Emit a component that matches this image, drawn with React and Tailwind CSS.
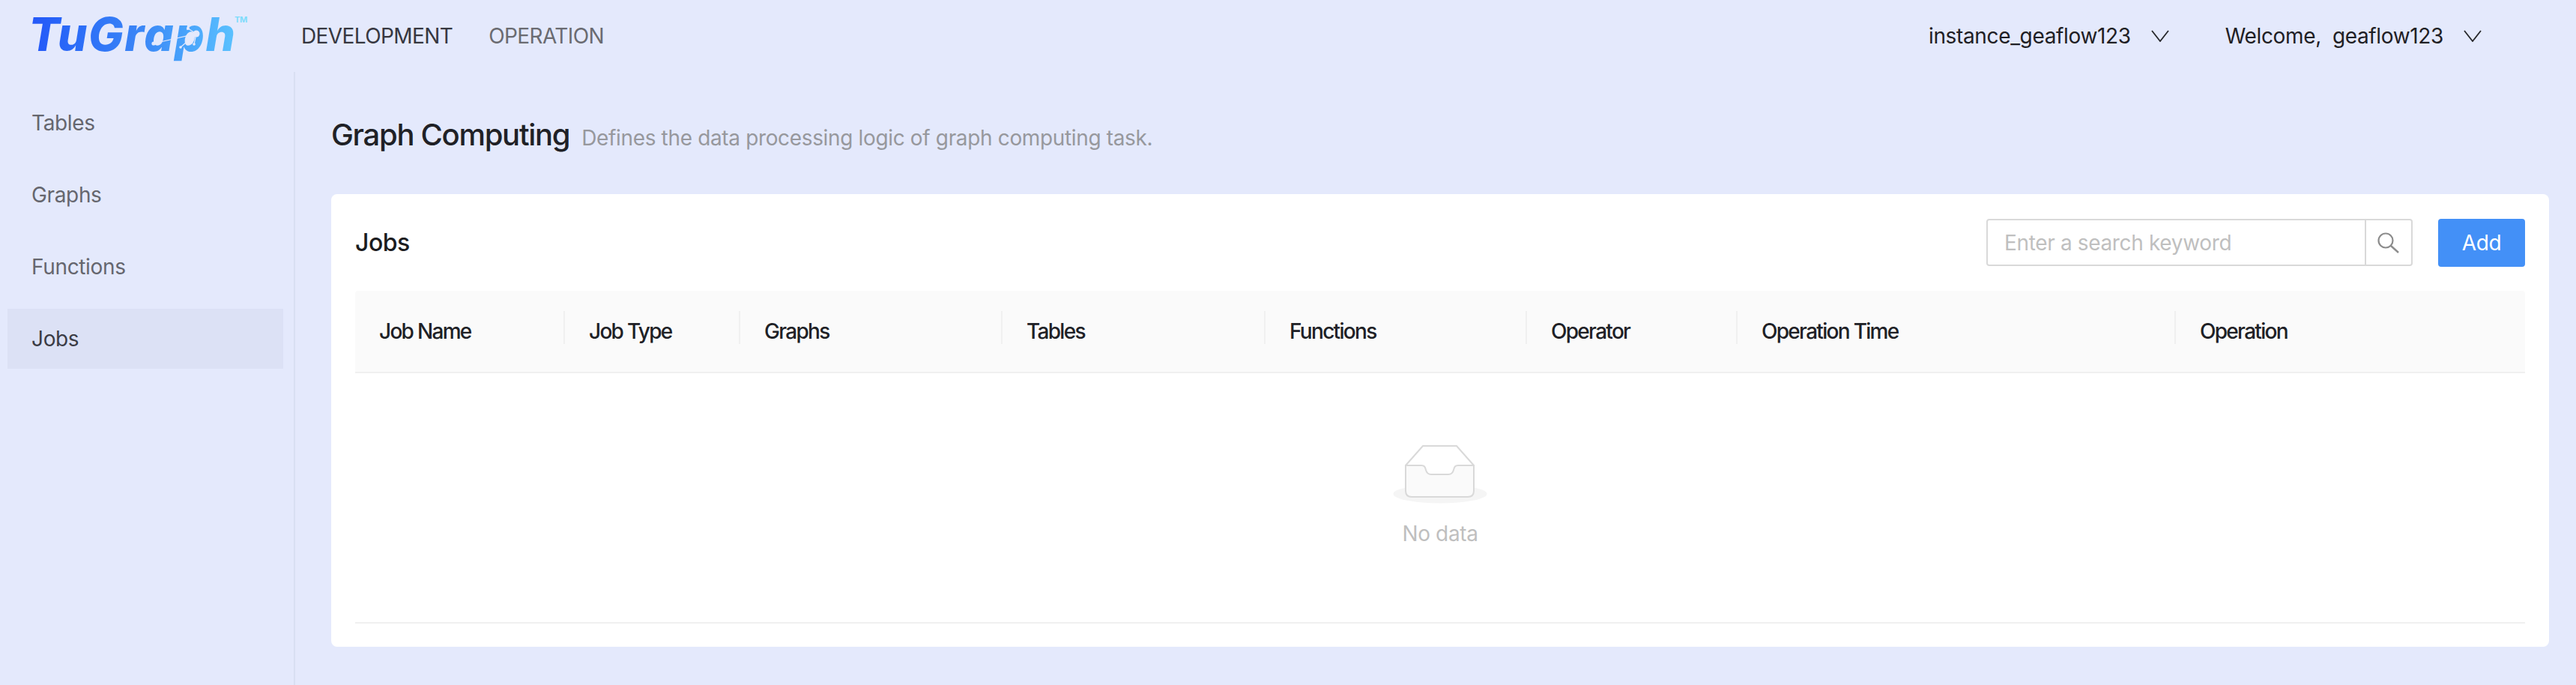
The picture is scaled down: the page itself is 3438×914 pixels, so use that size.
const SIDE_ITEMS = ['Tables', 'Graphs', 'Functions', 'Jobs'];

const COLUMNS = ['Job Name', 'Job Type', 'Graphs', 'Tables', 'Functions', 'Operator', 'Operation Time', 'Operation'];

function Logo() {
  return (
    <div className="relative w-[296px] h-[96px] ml-[38px] shrink-0">
      <span className="absolute left-0 top-[8px] text-[62px] leading-[75px] font-extrabold italic tracking-[1.6px] pr-[14px] bg-gradient-to-r from-[#2456f8] via-[#3a84f6] to-[#5fc8ff] bg-clip-text text-transparent">
        TuGraph
      </span>
      <span className="absolute left-[275px] top-[19px] text-[11px] leading-[14px] font-bold text-[#7fdcfb]">TM</span>
      {/* network mark over the "ph" */}
      <svg className="absolute left-0 top-0" width="296" height="96" viewBox="0 0 296 96" fill="none">
        <g stroke="#e4e9fc" strokeWidth="1.2">
          <path d="M167 58L224 45L203 63" />
          <path d="M224 45L213 38M224 45L221 59" />
        </g>
        <g fill="#e4e9fc">
          <circle cx="167" cy="58" r="2.6" />
          <circle cx="224" cy="45" r="4.5" />
          <circle cx="213" cy="38" r="2" />
          <circle cx="221" cy="59" r="1.8" />
          <circle cx="203" cy="63" r="1.8" />
        </g>
      </svg>
    </div>
  );
}

function Caret() {
  return (
    <svg width="24" height="16" viewBox="0 0 24 16" fill="none" className="ml-[27px] shrink-0">
      <path d="M1 1L12 15L23 1" stroke="#26272b" strokeWidth="1.8" />
    </svg>
  );
}

function SearchIcon() {
  return (
    <svg width="30" height="28" viewBox="0 0 30 28" fill="none">
      <circle cx="11" cy="11" r="9.5" stroke="#8c8c8c" strokeWidth="2.2" />
      <path d="M18 18L28 27" stroke="#8c8c8c" strokeWidth="2.4" />
    </svg>
  );
}

function EmptyBox() {
  return (
    <svg width="126" height="82" viewBox="0 0 126 82" fill="none">
      <ellipse cx="63" cy="66" rx="62.5" ry="12.5" fill="#f5f5f5" />
      <path d="M17 28L40 2H85L108 28" fill="#ffffff" stroke="#d9d9d9" strokeWidth="2" />
      <path
        d="M17 28H38C42 28 43 30 44 34C45 38 47 40 51 40H74C78 40 80 38 81 34C82 30 83 28 87 28H108V62C108 67 105 70 100 70H25C20 70 17 67 17 62Z"
        fill="#fafafa"
        stroke="#d9d9d9"
        strokeWidth="2"
      />
    </svg>
  );
}

export default function App() {
  return (
    <div className="min-h-[914px] bg-[#e4e9fc] font-['Inter',sans-serif] text-[28px] tracking-[-0.35px]">
      {/* Top bar */}
      <header className="flex items-center h-[96px]">
        <Logo />
        <nav className="flex items-center gap-[48px] ml-[68px] leading-[40px] tracking-[-0.6px]">
          <span className="text-[#363740]">DEVELOPMENT</span>
          <span className="text-[#6a6b71]">OPERATION</span>
        </nav>
        <div className="flex items-center ml-auto pr-[126px] text-[#1f2024]">
          <span>instance_geaflow123</span>
          <Caret />
          <span className="ml-[75px] whitespace-pre">Welcome,  geaflow123</span>
          <Caret />
        </div>
      </header>

      <div className="flex h-[818px]">
        {/* Side menu */}
        <aside className="w-[394px] shrink-0 border-r-2 border-[#d9dff2] pt-[28px] pl-[10px] pr-[14px]">
          <div className="flex flex-col gap-[16px]">
            {SIDE_ITEMS.map(item => (
              <div
                key={item}
                className={`h-[80px] flex items-center pl-[32px] ${item === 'Jobs' ? 'bg-[#dce1f5] text-[#3b3c45]' : 'text-[#65666e]'}`}
              >
                {item}
              </div>
            ))}
          </div>
        </aside>

        {/* Content */}
        <main className="flex-1 pl-[48px] pr-[36px]">
          <div className="flex items-baseline h-[163px] pt-[58px]">
            <h1 className="text-[40px] leading-[52px] font-medium tracking-[-1.3px] text-[#202126]">Graph Computing</h1>
            <span className="ml-[16px] text-[#97989d]">Defines the data processing logic of graph computing task.</span>
          </div>

          <section className="bg-white rounded-[8px] h-[604px] px-[32px] pt-[33px] flex flex-col">
            <div className="flex items-center justify-between h-[63px]">
              <h2 className="text-[32px] font-medium tracking-[-0.5px] text-[#1b1c20]">Jobs</h2>
              <div className="flex items-center gap-[34px]">
                <div className="flex h-[63px] w-[569px] border-2 border-[#d9d9d9] rounded-[4px]">
                  <input
                    placeholder="Enter a search keyword"
                    className="flex-1 min-w-0 px-[22px] outline-none tracking-[-0.35px] placeholder:text-[#bfbfbf]"
                  />
                  <div className="w-[62px] flex items-center justify-center border-l-2 border-[#d9d9d9]">
                    <SearchIcon />
                  </div>
                </div>
                <button className="w-[116px] h-[64px] bg-[#4390f7] text-white rounded-[4px]">Add</button>
              </div>
            </div>

            {/* Table header */}
            <div className="mt-[33px] h-[110px] bg-[#fafafa] border-b-2 border-[#f0f0f0] rounded-t-[4px] grid grid-cols-[280px_234px_350px_351px_349px_281px_585px_1fr] items-center font-medium tracking-[-1.7px] text-[#202126]">
              {COLUMNS.map((col, i) => (
                <div key={col} className="relative px-[32px]">
                  {col}
                  {i < COLUMNS.length - 1 && (
                    <span className="absolute right-0 top-[-6px] h-[44px] w-[2px] bg-[#f0f0f0]" />
                  )}
                </div>
              ))}
            </div>

            {/* Empty state */}
            <div className="h-[334px] border-b-2 border-[#f0f0f0] flex flex-col items-center pt-[95px]">
              <EmptyBox />
              <span className="mt-[17px] text-[#bfbfbf] leading-[40px]">No data</span>
            </div>
          </section>
        </main>
      </div>
    </div>
  );
}
